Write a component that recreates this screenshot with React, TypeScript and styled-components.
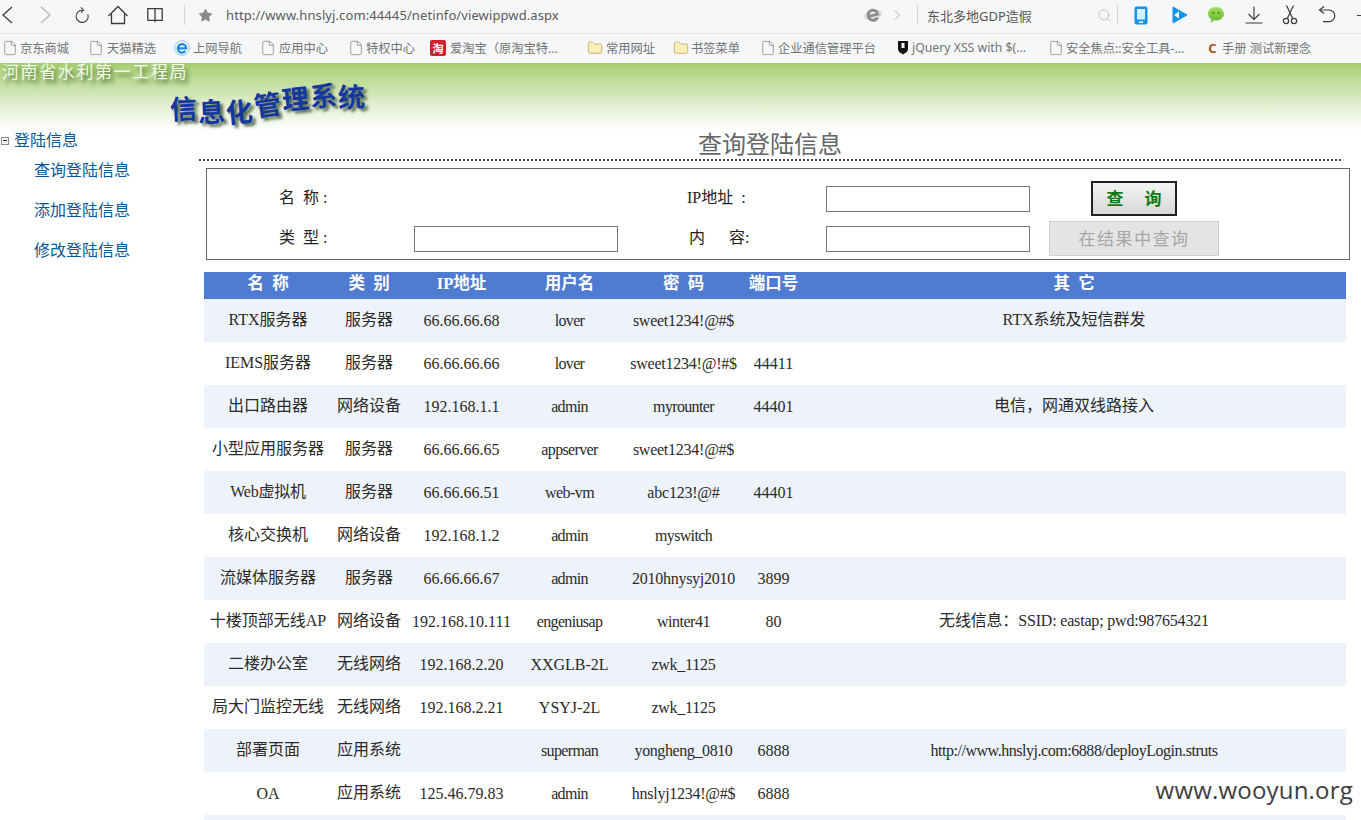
import React from 'react';
import styled, { createGlobalStyle } from 'styled-components';
import { Star, Search, File, Folder } from 'lucide-react';

const chromeFont = `"Noto Sans", "Noto Sans CJK SC", sans-serif`;
const pageFont = `"Liberation Serif", "Noto Sans CJK SC", serif`;

const GlobalStyle = createGlobalStyle`
  html, body {
    margin: 0;
    padding: 0;
    height: 100%;
    overflow: hidden;
    background: #fff;
  }
  * { box-sizing: border-box; }
`;

const Page = styled.div`
  position: relative;
  width: 1361px;
  height: 820px;
  overflow: hidden;
  font-family: ${pageFont};
`;

/* browser chrome */
const Toolbar = styled.div`
  display: flex;
  align-items: center;
  height: 34px;
  padding-bottom: 3px;
  background: #f6f7f9;
  border-bottom: 1px solid #e3e4e6;
  color: #555;
  font-family: ${chromeFont};
`;

const ToolSlot = styled.span<{ $w: number; $color?: string }>`
  display: flex;
  flex: none;
  align-items: center;
  justify-content: center;
  width: ${props => props.$w}px;
  color: ${props => props.$color || '#3a3a3a'};
`;

const Divider = styled.span<{ $w: number }>`
  flex: none;
  width: ${props => props.$w}px;
  height: 20px;
  border-right: 1px solid #d5d6d8;
`;

const UrlText = styled.span`
  flex: none;
  width: 639px;
  padding-left: 1px;
  font-size: 13px;
  letter-spacing: 0.1px;
  color: #5a5a5a;
`;

const SearchText = styled.span`
  flex: none;
  width: 177px;
  padding-left: 9px;
  font-size: 13px;
  color: #555;
`;

const Dash = styled.span`
  flex: none;
  width: 4px;
  height: 1px;
  margin-left: 11px;
  background: #444;
`;

const BookmarkBar = styled.div`
  display: flex;
  align-items: center;
  height: 29px;
  padding-bottom: 2px;
  background: #f6f7f9;
  font-family: ${chromeFont};
  font-size: 12.25px;
  color: #737373;
  white-space: nowrap;
`;

const Bookmark = styled.span<{ $w: number }>`
  display: flex;
  flex: none;
  align-items: center;
  width: ${props => props.$w}px;
`;

const BookmarkIcon = styled.span<{ $w: number }>`
  display: flex;
  flex: none;
  align-items: center;
  justify-content: center;
  width: ${props => props.$w}px;
`;

const TaoBadge = styled.span`
  display: flex;
  align-items: center;
  justify-content: center;
  width: 16px;
  height: 16px;
  border-radius: 2px;
  background: #d3202e;
  color: #fff;
  font-size: 11px;
  font-weight: 700;
`;

const CMark = styled.span`
  color: #a8551c;
  font-size: 13px;
  font-weight: 700;
`;

/* site banner */
const Banner = styled.header`
  height: 68px;
  background: linear-gradient(#a4cd6e 0%, #c3de9f 30%, #e2efd0 62%, #fff 100%);
`;

const OrgName = styled.div`
  height: 22px;
  padding-left: 2px;
  font-size: 17px;
  line-height: 19px;
  letter-spacing: 1.6px;
  color: #f4faec;
  text-shadow: 3px 4px 4px #4a7530;
`;

const SystemName = styled.div`
  display: flex;
  align-items: flex-end;
  height: 44px;
  padding-left: 170px;
  font-size: 27px;
  font-weight: 700;
  line-height: 32px;
  letter-spacing: 1px;
  color: #14369f;
  text-shadow: 3px 3px 3px #55684f;
`;

const SystemChar = styled.span<{ $rise: number; $tilt: number }>`
  display: inline-block;
  transform: translateY(${props => -props.$rise}px) rotate(${props => props.$tilt}deg);
`;

/* page body */
const Body = styled.div`
  display: flex;
`;

const Sidebar = styled.nav`
  flex: none;
  width: 199px;
  color: #09599b;
  font-size: 16px;
`;

const TreeHead = styled.div`
  display: flex;
  align-items: center;
  gap: 5px;
  height: 16px;
  padding-left: 1px;
  margin-bottom: 14px;
`;

const Toggle = styled.span`
  position: relative;
  width: 8px;
  height: 8px;
  margin-top: 3px;
  border: 1px solid #8a8a8a;
  background: #f4f4f4;

  &::after {
    content: '';
    position: absolute;
    left: 1px;
    right: 1px;
    top: 2px;
    height: 1px;
    background: #333;
  }
`;

const TreeLink = styled.a`
  display: block;
  height: 40px;
  padding-left: 34px;
  line-height: 20px;
  color: #09599b;
`;

const Main = styled.main`
  flex: none;
  width: 1162px;
`;

const PageTitle = styled.h1`
  width: 1142px;
  height: 30px;
  margin: 0;
  border-bottom: 2px dotted #444;
  text-align: center;
  font-size: 24px;
  font-weight: 400;
  line-height: 28px;
  color: #666;
`;

const SearchBox = styled.form`
  display: grid;
  grid-template-columns: 207px 204px 208px 204px 208px;
  grid-auto-rows: 40px;
  width: 1144px;
  height: 92px;
  margin: 7px 0 12px 7px;
  padding-top: 9px;
  border: 1px solid #666;
  align-items: center;
  font-size: 16px;
  color: #222;
`;

const FieldLabel = styled.label<{ $pad: number }>`
  padding-left: ${props => props.$pad}px;
  padding-bottom: 4px;
  white-space: pre;
`;

const FieldInput = styled.input`
  width: 204px;
  height: 26px;
  margin-top: 2px;
  padding: 0 4px;
  border: 1px solid #767676;
  background: #fff;
  border-radius: 0;
`;

const ButtonCell = styled.div`
  display: flex;
  justify-content: center;
`;

const SearchButton = styled.button`
  width: 86px;
  height: 35px;
  padding: 0 0 2px;
  border: 2px solid #222;
  background: linear-gradient(#f4f4f4, #d8d8d8);
  color: #0f7a12;
  font-family: ${pageFont};
  font-size: 17px;
  font-weight: 700;
  white-space: pre;
`;

const RefineButton = styled.button`
  width: 170px;
  height: 35px;
  padding: 0 0 2px;
  border: 1px solid #cfcfcf;
  background: #e4e4e4;
  color: #a6a6a6;
  font-family: ${pageFont};
  font-size: 17px;
  letter-spacing: 1.5px;
`;

const DataTable = styled.table`
  width: 1142px;
  margin-left: 5px;
  border-collapse: collapse;
  table-layout: fixed;
  font-size: 16px;
  color: #2a2a2a;
`;

const HeadCell = styled.th`
  height: 27px;
  padding: 0 0 3px;
  background: #4f7bd0;
  color: #fff;
  font-size: 16.5px;
  font-weight: 700;
  line-height: 20px;
  white-space: pre;
`;

const Row = styled.tr`
  &:nth-child(odd) td {
    background: #eef2fa;
  }
`;

const Cell = styled.td<{ $tight: number; $cjk: boolean }>`
  height: 43px;
  padding: 0 0 ${props => (props.$cjk ? 2 : 0)}px;
  line-height: 20px;
  text-align: center;
  white-space: nowrap;
  letter-spacing: ${props => props.$tight}px;
`;

const Watermark = styled.div`
  position: absolute;
  right: 8px;
  bottom: 14px;
  font-family: "Open Sans", "Liberation Sans", sans-serif;
  font-size: 24px;
  letter-spacing: 0.2px;
  color: #3d3d3d;
`;

const BackIcon = () => (
  <svg width="16" height="30" viewBox="0 0 16 30" fill="none" stroke="currentColor" strokeWidth="1.3">
    <path d="M12 7l-9 8 9 8" />
  </svg>
);

const ForwardIcon = () => (
  <svg width="16" height="30" viewBox="0 0 16 30" fill="none" stroke="currentColor" strokeWidth="1.3">
    <path d="M4 7l9 8-9 8" />
  </svg>
);

const ReloadIcon = () => (
  <svg width="20" height="22" viewBox="0 0 20 22" fill="none" stroke="currentColor" strokeWidth="1.3">
    <path d="M10 5A7.600 7.600 0 1 0 17.300 10" />
    <path d="M8.500 1.500l3.500 3.400-3.200 3" />
  </svg>
);

const HomeIcon = () => (
  <svg width="22" height="20" viewBox="0 0 22 20" fill="none" stroke="currentColor" strokeWidth="1.3">
    <path d="M1.500 11L11 1.500 20.500 11" />
    <path d="M4.500 9v9.500h13V9" />
  </svg>
);

const BookIcon = () => (
  <svg width="20" height="18" viewBox="0 0 20 18" fill="none" stroke="currentColor" strokeWidth="1.4">
    <path d="M2 2h16v13H2zM10 2v15" />
  </svg>
);

const BrowserEIcon = () => (
  <svg width="18" height="18" viewBox="0 0 18 18" fill="none" stroke="#8f8f8f">
    <g transform="rotate(-14 9 9)">
      <ellipse cx="9" cy="9" rx="8.500" ry="4" strokeWidth="0.800" stroke="#b8b8b8" />
      <path d="M4 9.300h10A5 5 0 1 0 12.800 12.500" strokeWidth="3" />
    </g>
  </svg>
);

const NavEIcon = () => (
  <svg width="16" height="16" viewBox="0 0 16 16" fill="none" stroke="#1e88e5">
    <circle cx="8" cy="8" r="7.300" stroke="#8cc6f2" strokeWidth="1" />
    <path d="M4 8.300h8.200A4.200 4.200 0 1 0 11.300 11" strokeWidth="2.200" />
  </svg>
);

const PhoneIcon = () => (
  <svg width="14" height="19" viewBox="0 0 14 19">
    <rect x="0.500" y="0.500" width="13" height="18" rx="2" fill="#1496e8" />
    <rect x="3" y="3" width="8" height="10.500" fill="#d9eefb" />
    <rect x="5" y="15.500" width="4" height="1.400" fill="#fff" />
  </svg>
);

const PlayIcon = () => (
  <svg width="16" height="18" viewBox="0 0 16 18">
    <path d="M1 1l14 8-14 8z" fill="#1496e8" stroke="#1496e8" strokeLinejoin="round" />
    <path d="M2 9l5-3.500v7z" fill="#f6f7f9" />
  </svg>
);

const WechatIcon = () => (
  <svg width="18" height="18" viewBox="0 0 18 18">
    <defs>
      <linearGradient id="wechat-fill" x1="0" y1="0" x2="0" y2="1">
        <stop offset="0" stopColor="#a4e05a" />
        <stop offset="1" stopColor="#64b32f" />
      </linearGradient>
    </defs>
    <path d="M9 1c4.400 0 8 2.900 8 6.800s-3.600 6.800-8 6.800c-.8 0-1.500-.1-2.200-.3L3.500 17l1-3.500C2.400 12.200 1 10.200 1 7.800 1 3.900 4.600 1 9 1z" fill="url(#wechat-fill)" />
    <circle cx="6.300" cy="6.800" r="1" fill="#3f7d18" />
    <circle cx="11.700" cy="6.800" r="1" fill="#3f7d18" />
  </svg>
);

const DownloadIcon = () => (
  <svg width="18" height="18" viewBox="0 0 18 18" fill="none" stroke="currentColor" strokeWidth="1.1">
    <path d="M9 0.500v13M3.500 8L9 13.500 14.500 8M0.500 17h17" />
  </svg>
);

const ScissorsIcon = () => (
  <svg width="16" height="20" viewBox="0 0 16 20" fill="none" stroke="currentColor" strokeWidth="1.2">
    <path d="M4.500 0.500l6 12.500M11.500 0.500l-6 12.500" />
    <circle cx="4" cy="16" r="2.600" />
    <circle cx="12" cy="16" r="2.600" />
  </svg>
);

const UndoIcon = () => (
  <svg width="18" height="18" viewBox="0 0 18 18" fill="none" stroke="currentColor" strokeWidth="1.200">
    <path d="M2 4h9a5.800 5.800 0 0 1 0 11.600H5" />
    <path d="M6 0.500L1.500 4 6 7.500" />
  </svg>
);

const ShieldIcon = () => (
  <svg width="12" height="15" viewBox="0 0 12 15">
    <path d="M1 1h10v8c0 2.500-2.500 4-5 5.500C3.500 13 1 11.500 1 9z" fill="#111" />
    <rect x="4.500" y="3" width="3" height="5" fill="#fff" />
  </svg>
);

const PageFile = () => <File size={16} strokeWidth={1} color="#777" />;
const YellowFolder = () => <Folder size={16} strokeWidth={1} color="#b59a4a" fill="#fbeeb6" />;

const bookmarks: { w: number; iw: number; icon: React.ReactNode; label: string }[] = [
  { w: 85, iw: 20, icon: <PageFile />, label: '京东商城' },
  { w: 85, iw: 22, icon: <PageFile />, label: '天猫精选' },
  { w: 87, iw: 23, icon: <NavEIcon />, label: '上网导航' },
  { w: 89, iw: 22, icon: <PageFile />, label: '应用中心' },
  { w: 80, iw: 20, icon: <PageFile />, label: '特权中心' },
  { w: 158, iw: 24, icon: <TaoBadge>淘</TaoBadge>, label: '爱淘宝（原淘宝特...' },
  { w: 87, iw: 22, icon: <YellowFolder />, label: '常用网址' },
  { w: 87, iw: 20, icon: <YellowFolder />, label: '书签菜单' },
  { w: 135, iw: 20, icon: <PageFile />, label: '企业通信管理平台' },
  { w: 153, iw: 19, icon: <ShieldIcon />, label: 'jQuery XSS with $(...' },
  { w: 157, iw: 20, icon: <PageFile />, label: '安全焦点::安全工具-...' },
  { w: 120, iw: 19, icon: <CMark>C</CMark>, label: '手册 测试新理念' },
];

const systemChars = [
  { c: '信', rise: 3, tilt: -3 },
  { c: '息', rise: 0, tilt: -3 },
  { c: '化', rise: 0, tilt: -5 },
  { c: '管', rise: 7, tilt: -8 },
  { c: '理', rise: 13, tilt: -6 },
  { c: '系', rise: 16, tilt: -4 },
  { c: '统', rise: 15, tilt: -3 },
];

const columns = [
  { label: '名  称', width: 128 },
  { label: '类  别', width: 74 },
  { label: 'IP地址', width: 111 },
  { label: '用户名', width: 105 },
  { label: '密  码', width: 123 },
  { label: '端口号', width: 57 },
  { label: '其  它', width: 544 },
];

const rows: string[][] = [
  ['RTX服务器', '服务器', '66.66.66.68', 'lover', 'sweet1234!@#$', '', 'RTX系统及短信群发'],
  ['IEMS服务器', '服务器', '66.66.66.66', 'lover', 'sweet1234!@!#$', '44411', ''],
  ['出口路由器', '网络设备', '192.168.1.1', 'admin', 'myrounter', '44401', '电信，网通双线路接入'],
  ['小型应用服务器', '服务器', '66.66.66.65', 'appserver', 'sweet1234!@#$', '', ''],
  ['Web虚拟机', '服务器', '66.66.66.51', 'web-vm', 'abc123!@#', '44401', ''],
  ['核心交换机', '网络设备', '192.168.1.2', 'admin', 'myswitch', '', ''],
  ['流媒体服务器', '服务器', '66.66.66.67', 'admin', '2010hnysyj2010', '3899', ''],
  ['十楼顶部无线AP', '网络设备', '192.168.10.111', 'engeniusap', 'winter41', '80', '无线信息：SSID: eastap; pwd:987654321'],
  ['二楼办公室', '无线网络', '192.168.2.20', 'XXGLB-2L', 'zwk_1125', '', ''],
  ['局大门监控无线', '无线网络', '192.168.2.21', 'YSYJ-2L', 'zwk_1125', '', ''],
  ['部署页面', '应用系统', '', 'superman', 'yongheng_0810', '6888', 'http://www.hnslyj.com:6888/deployLogin.struts'],
  ['OA', '应用系统', '125.46.79.83', 'admin', 'hnslyj1234!@#$', '6888', ''],
  ['', '', '', '', '', '', ''],
];

// the reference's lowercase latin runs narrower than its digits
const tightness = (value: string) => {
  if (!value) return 0;
  const lower = value.replace(/[^a-z]/g, '').length;
  return Number(((-0.65 * lower) / value.length).toFixed(2));
};

const hasCjk = (value: string) => /[^\x00-\x7f]/.test(value);

const App: React.FC = () => {
  return (
    <Page>
      <GlobalStyle />
      <Toolbar>
        <ToolSlot $w={16}><BackIcon /></ToolSlot>
        <ToolSlot $w={58} $color="#b5b5b5"><ForwardIcon /></ToolSlot>
        <ToolSlot $w={16}><ReloadIcon /></ToolSlot>
        <ToolSlot $w={56}><HomeIcon /></ToolSlot>
        <ToolSlot $w={18}><BookIcon /></ToolSlot>
        <Divider $w={21} />
        <ToolSlot $w={40} $color="#8a8a8a"><Star size={15} fill="#8a8a8a" strokeWidth={1} /></ToolSlot>
        <UrlText>http://www.hnslyj.com:44445/netinfo/viewippwd.aspx</UrlText>
        <ToolSlot $w={18}><BrowserEIcon /></ToolSlot>
        <ToolSlot $w={30} $color="#aaa">
          <svg width="8" height="12" viewBox="0 0 8 12" fill="none" stroke="currentColor" strokeWidth="1">
            <path d="M2 1.500L6.500 6 2 10.500" />
          </svg>
        </ToolSlot>
        <Divider $w={6} />
        <SearchText>东北多地GDP造假</SearchText>
        <ToolSlot $w={18} $color="#aaa"><Search size={15} strokeWidth={1.1} /></ToolSlot>
        <Divider $w={5} />
        <ToolSlot $w={46}><PhoneIcon /></ToolSlot>
        <ToolSlot $w={32}><PlayIcon /></ToolSlot>
        <ToolSlot $w={40}><WechatIcon /></ToolSlot>
        <ToolSlot $w={36}><DownloadIcon /></ToolSlot>
        <ToolSlot $w={36}><ScissorsIcon /></ToolSlot>
        <ToolSlot $w={38}><UndoIcon /></ToolSlot>
        <Dash />
      </Toolbar>
      <BookmarkBar>
        {bookmarks.map(b => (
          <Bookmark key={b.label} $w={b.w}>
            <BookmarkIcon $w={b.iw}>{b.icon}</BookmarkIcon>
            {b.label}
          </Bookmark>
        ))}
      </BookmarkBar>
      <Banner>
        <OrgName>河南省水利第一工程局</OrgName>
        <SystemName>
          {systemChars.map(s => (
            <SystemChar key={s.c} $rise={s.rise} $tilt={s.tilt}>{s.c}</SystemChar>
          ))}
        </SystemName>
      </Banner>
      <Body>
        <Sidebar>
          <TreeHead><Toggle />登陆信息</TreeHead>
          <TreeLink>查询登陆信息</TreeLink>
          <TreeLink>添加登陆信息</TreeLink>
          <TreeLink>修改登陆信息</TreeLink>
        </Sidebar>
        <Main>
          <PageTitle>查询登陆信息</PageTitle>
          <SearchBox>
            <FieldLabel $pad={72}>{'名  称 :'}</FieldLabel>
            <span />
            <FieldLabel $pad={69}>{'IP地址  :'}</FieldLabel>
            <FieldInput />
            <ButtonCell><SearchButton type="button">{'查     询'}</SearchButton></ButtonCell>
            <FieldLabel $pad={72}>{'类  型 :'}</FieldLabel>
            <FieldInput />
            <FieldLabel $pad={71}>{'内      容:'}</FieldLabel>
            <FieldInput />
            <ButtonCell><RefineButton type="button">在结果中查询</RefineButton></ButtonCell>
          </SearchBox>
          <DataTable>
            <colgroup>
              {columns.map(c => <col key={c.label} width={c.width} />)}
            </colgroup>
            <thead>
              <tr>
                {columns.map(c => <HeadCell key={c.label}>{c.label}</HeadCell>)}
              </tr>
            </thead>
            <tbody>
              {rows.map((row, i) => (
                <Row key={i}>
                  {row.map((value, j) => (
                    <Cell key={j} $tight={tightness(value)} $cjk={hasCjk(value)}>{value}</Cell>
                  ))}
                </Row>
              ))}
            </tbody>
          </DataTable>
        </Main>
      </Body>
      <Watermark>www.wooyun.org</Watermark>
    </Page>
  );
};

export default App;
